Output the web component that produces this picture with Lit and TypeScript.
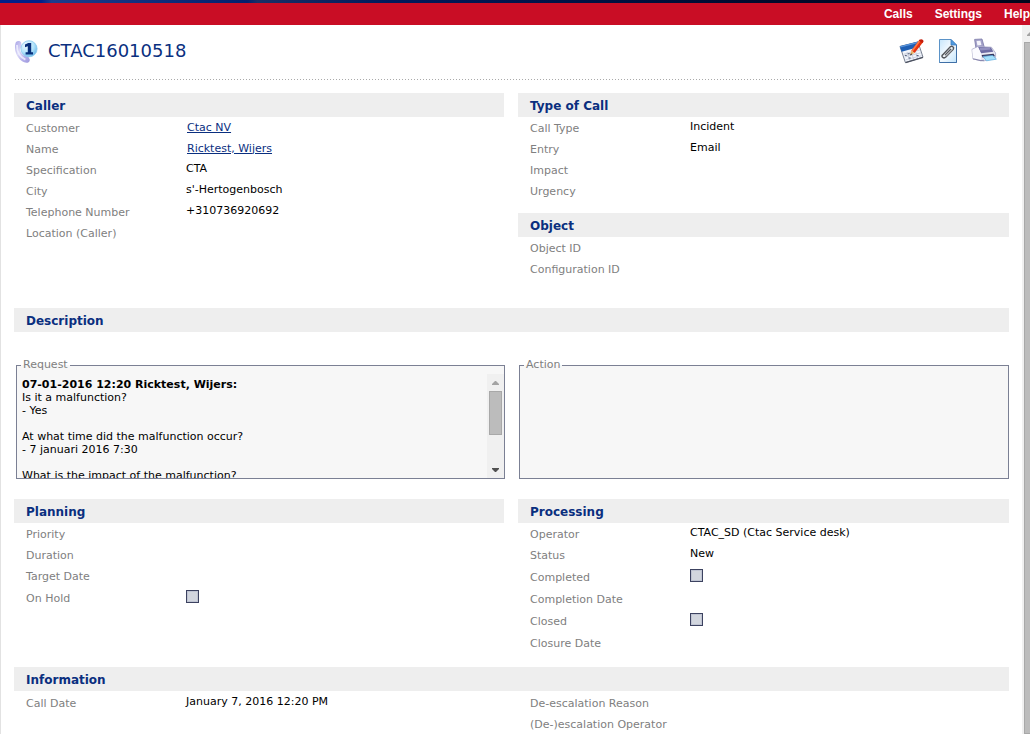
import { LitElement, html, css, svg } from "lit";
import { customElement, property } from "lit/decorators.js";

type Field = { label: string; value?: string; link?: boolean; check?: string };

const callerFields: Field[] = [
  { label: "Customer", value: "Ctac NV", link: true },
  { label: "Name", value: "Ricktest, Wijers", link: true },
  { label: "Specification", value: "CTA" },
  { label: "City", value: "s'-Hertogenbosch" },
  { label: "Telephone Number", value: "+310736920692" },
  { label: "Location (Caller)" },
];
const typeFields: Field[] = [
  { label: "Call Type", value: "Incident" },
  { label: "Entry", value: "Email" },
  { label: "Impact" },
  { label: "Urgency" },
];
const objectFields: Field[] = [{ label: "Object ID" }, { label: "Configuration ID" }];
const planningFields: Field[] = [
  { label: "Priority" },
  { label: "Duration" },
  { label: "Target Date" },
  { label: "On Hold", check: "on-hold" },
];
const processingFields: Field[] = [
  { label: "Operator", value: "CTAC_SD (Ctac Service desk)" },
  { label: "Status", value: "New" },
  { label: "Completed", check: "completed" },
  { label: "Completion Date" },
  { label: "Closed", check: "closed" },
  { label: "Closure Date" },
];
const infoFields: Field[] = [{ label: "Call Date", value: "January 7, 2016 12:20 PM" }];
const escalationFields: Field[] = [
  { label: "De-escalation Reason" },
  { label: "(De-)escalation Operator" },
];

const phoneIcon = svg`<svg width="24" height="24" viewBox="0 0 24 24" aria-hidden="true">
  <defs>
    <radialGradient id="ball" cx=".35" cy=".3" r=".8"><stop offset="0" stop-color="#eefaff"/><stop offset=".55" stop-color="#b4e4fb"/><stop offset="1" stop-color="#5fb0e6"/></radialGradient>
    <linearGradient id="horn" x1="0" y1="0" x2="1" y2="1"><stop offset="0" stop-color="#a9a4e6"/><stop offset=".4" stop-color="#dcdaf8"/><stop offset=".7" stop-color="#b3aeea"/><stop offset="1" stop-color="#9f99dc"/></linearGradient>
  </defs>
  <path d="M2 3C3.5 1.4 6 1.6 7 3.2L8 7.6C7.6 9 6.4 9.4 5.8 10C6.2 12.6 7.8 15 10 16.4C11.2 15.8 12.6 15.6 13.8 16.8L15.8 20.4C16 22.6 14.4 23.8 12.4 23.8C6.4 23 1.2 16.4 1 9C.9 7 1.2 4.6 2 3Z" fill="url(#horn)"/>
  <path d="M3 6C2.8 12 5.6 17.8 11.4 20.6" fill="none" stroke="#f3f2ff" stroke-width="1.8" opacity=".8"/>
  <circle cx="15" cy="9.8" r="8.1" fill="url(#ball)" stroke="#8ecbee" stroke-width=".8"/>
  <path d="M11 5.6L14.2 4H17.2V13.2H19V15.4H11.6V13.2H13.8V7.2L11 8.2Z" fill="#07307c"/>
</svg>`;

const editIcon = svg`<svg width="26" height="26" viewBox="0 0 26 26" aria-hidden="true">
  <path d="M1 8.4L19 4L24 19.2L6.4 24.6Z" fill="#f2f5fb" stroke="#6a7386" stroke-width=".9"/>
  <path d="M.8 8.2L19 3.6L20.8 8.8L2.6 13.8Z" fill="#1f5fb4"/>
  <path d="M1 8.2L19 3.8L19.4 5L1.4 9.6Z" fill="#5d97dc"/>
  <path d="M4.8 16.2L20.8 12M5.6 19L21.8 14.8M6.6 21.8L22.8 17.6M8 14L10.6 22.4M12 13L14.6 21.4M16 11.8L18.6 20.2" stroke="#bcc3d4" stroke-width=".7" fill="none"/>
  <path d="M5.8 17.4h2M9.6 20h2M17.6 17.6h2M8.8 15.8h2" stroke="#4a5674" stroke-width="1"/>
  <path d="M6.6 24.6L24 19.4" stroke="#4d5260" stroke-width="1.2"/>
  <path d="M20.6 1.8L24.2 4L15.6 15L12.4 12.6Z" fill="#e8320f"/>
  <path d="M20.6 1.8L22 2.6L13.8 13.6L12.4 12.6Z" fill="#ff7a45"/>
  <path d="M20.6 1.8C22 .2 25.2 1.8 24.4 3.8L23.4 5L19.8 2.8Z" fill="#c41d0c"/>
  <path d="M12.4 12.6L15.6 15L11.2 17.2Z" fill="#e9b56b"/><path d="M11.9 15.3L11 17.4L13.2 16.2Z" fill="#222"/>
</svg>`;

const attachIcon = svg`<svg width="26" height="26" viewBox="0 0 26 26" aria-hidden="true">
  <defs><linearGradient id="sheet" x1="0" y1="0" x2="1" y2="1"><stop offset="0" stop-color="#c7e6fb"/><stop offset=".5" stop-color="#f6fbff"/><stop offset="1" stop-color="#c2e4fb"/></linearGradient></defs>
  <path d="M4.5 1.5H16L21.5 7V24.5H4.5Z" fill="url(#sheet)" stroke="#5b93c8"/>
  <path d="M4.5 24.5H21.5V7" fill="none" stroke="#3f6fa6"/>
  <path d="M16 1.5V7H21.5Z" fill="#4e9be0" stroke="#3d7cc0" stroke-width=".8"/>
  <g fill="none" stroke-linecap="round"><path d="M7.6 17L15.4 8.8C16.8 7.4 19.6 9.2 18.2 11.2L10.8 19C8.8 21 5.6 18.8 7.6 16.8M10.4 16.6L15.6 11.2" stroke="#55585d" stroke-width="1.5"/><path d="M8.6 17.6L15.8 9.8M11.4 18L17.6 11.4" stroke="#d6d9dc" stroke-width=".6"/></g>
</svg>`;

const printIcon = svg`<svg width="26" height="26" viewBox="0 0 26 26" aria-hidden="true">
  <path d="M3.6 1.4L11 1L13.4 9.6L5 10.6Z" fill="#a3a1c8" stroke="#7a78a8" stroke-width=".8"/>
  <path d="M5.6 3L9.4 2.8L10.4 7L6.4 7.4Z" fill="#f4f4fb"/>
  <path d="M1 11.4L7 8.6L20.4 9.2L24.6 15V19.4L12.6 23L2 21Z" fill="#e9e9f3" stroke="#a6a6c6" stroke-width=".8"/>
  <path d="M7 9L20 9.4L22.4 13.8L10 15.2Z" fill="#6e6ca4"/>
  <path d="M8.4 9.8L18.8 10L19.8 11.6L9.4 12.4Z" fill="#9391c0"/>
  <path d="M1.2 11.8L7 9L10 15.4L9.8 22.4L2 21Z" fill="#fbfbff"/>
  <path d="M2 20.8L9.8 22.6L13 22.2" fill="none" stroke="#8a88ae" stroke-width="1.1"/>
  <path d="M10.6 17L22.6 15.8L24 18.2L11.6 19.6Z" fill="#35345c"/>
  <path d="M12 18.4L21.8 17.4L25.4 21.2L15.4 22.8Z" fill="#a4e0fb" stroke="#5ca9dc" stroke-width=".7"/>
</svg>`;

const fontBase = css`
  :host {
    display: block;
    font: 11px/13px "DejaVu Sans", Verdana, sans-serif;
  }
  * {
    box-sizing: border-box;
  }
`;

@customElement("field-section")
export class FieldSection extends LitElement {
  @property() heading = "";
  @property({ attribute: false }) fields: Field[] = [];

  static styles = [
    fontBase,
    css`
      .heading {
        margin: 0;
        padding: 2px 12px 0;
        background: #eee;
        color: #0a2f7f;
        font: bold 12px/22px "DejaVu Sans", Verdana, sans-serif;
      }
      .row {
        display: grid;
        grid-template-columns: 160px 1fr;
        align-items: center;
        min-height: 21px;
        padding: 1px 12px 0;
      }
      .row.roomy {
        min-height: 22px;
        padding-top: 2px;
      }
      .label {
        color: #808080;
      }
      .value {
        padding-bottom: 3px;
        color: #000;
      }
      .value.linked {
        padding: 0 0 2px 1px;
      }
      .link {
        color: #0a2f7f;
      }
      .check {
        display: block;
        appearance: none;
        width: 13px;
        height: 13px;
        margin: 0 0 3px;
        border: 1px solid #3c4260;
        background: #d2d6de;
        box-shadow: inset 0 0 0 1px #bfc4d2;
      }
    `,
  ];

  private row(f: Field, roomy: boolean) {
    if (f.check) {
      return html`<div class="row roomy">
        <label class="label" for=${f.check}>${f.label}</label>
        <input class="check" type="checkbox" id=${f.check} />
      </div>`;
    }
    return html`<div class="row ${roomy ? "roomy" : ""}">
      <span class="label">${f.label}</span>
      ${f.value
        ? html`<span class="value ${f.link ? "linked" : ""}"
            >${f.link ? html`<a class="link" href="#">${f.value}</a>` : f.value}</span
          >`
        : ""}
    </div>`;
  }

  render() {
    const firstCheck = this.fields.findIndex((f) => f.check);
    return html`
      ${this.heading ? html`<h2 class="heading">${this.heading}</h2>` : ""}
      ${this.fields.map((f, i) => this.row(f, firstCheck >= 0 && i > firstCheck))}
    `;
  }
}

@customElement("app-root")
export class AppRoot extends LitElement {
  static styles = [
    fontBase,
    css`
      :host {
        height: 100vh;
        overflow: hidden;
        background: #fff;
      }
      .shell {
        display: flex;
        flex-direction: column;
        height: 100%;
      }
      .strip {
        flex: none;
        height: 3px;
        background: linear-gradient(90deg, #001f8a 0 4%, #1d3c8c 5%, #03206e 24%, #1a2f66 25%, #001a5c 38%, #020a2c 75%, #02061c);
      }
      .nav {
        flex: none;
        display: flex;
        justify-content: flex-end;
        gap: 22px;
        height: 22px;
        overflow: hidden;
        background: #c90d25;
      }
      .navlink {
        color: #fff;
        font: bold 12px/22px "Liberation Sans", Arial, sans-serif;
        text-decoration: none;
      }
      .main {
        flex: 1;
        display: flex;
        min-height: 0;
      }
      .content {
        flex: 1;
        min-width: 0;
        overflow: hidden;
        padding: 0 13px;
        border-left: 1px solid #e2e2e2;
      }
      .top {
        display: flex;
        align-items: center;
        gap: 10px;
        height: 55px;
        padding: 0 12px 4px 0;
        margin-bottom: 13px;
        background: repeating-linear-gradient(90deg, transparent 0 1px, #aaa 1px 2px, transparent 2px 3px) bottom / 100% 1px
          no-repeat;
      }
      .title {
        flex: 1;
        margin: 0;
        color: #0a2f7f;
        font: 18px/24px "DejaVu Sans", Verdana, sans-serif;
      }
      .tool {
        display: flex;
        padding: 0;
        border: 0;
        background: none;
      }
      .columns {
        display: grid;
        grid-template-columns: 490fr 491fr;
        gap: 14px;
      }
      .stack {
        display: grid;
        gap: 12px;
      }
      .upper {
        padding-bottom: 29px;
      }
      .notes {
        padding: 26px 0 20px 2px;
      }
      .note {
        min-width: 0;
        height: 121px;
        margin: 0;
        padding: 1px 0 0;
        border: 1px solid #7b8094;
        background: #f7f7f7;
      }
      .legend {
        margin-left: 4px;
        padding: 0 2px 2px;
        color: #808080;
      }
      .scroller {
        display: flex;
        height: 104px;
      }
      .text {
        flex: 1;
        overflow: hidden;
        padding: 4px 5px 0;
      }
      .line {
        margin: 0;
      }
      .bar {
        flex: none;
        display: flex;
        flex-direction: column;
        width: 17px;
        padding: 0 2px;
        background: #f0f0f0;
      }
      .arrow {
        flex: none;
        display: flex;
        align-items: center;
        justify-content: center;
        width: 100%;
        height: 17px;
        padding: 0;
        border: 0;
        background: none;
      }
      .thumb {
        height: 44px;
        margin-bottom: auto;
        border: 1px solid #a8a8a8;
        background: #bcbcbc;
      }
      .lower {
        padding-bottom: 14px;
      }
      .info {
        padding-top: 1px;
      }
      .pagebar {
        flex: none;
        width: 8px;
        overflow: hidden;
      }
      .pagebar .bar {
        height: 100%;
      }
      .pagebar .thumb {
        flex: 1;
      }
    `,
  ];

  private arrow(label: string, d: string, fill: string) {
    return html`<button class="arrow" aria-label=${label}>
      <svg width="7" height="4" viewBox="0 0 7 4"><path d=${d} fill=${fill} /></svg>
    </button>`;
  }

  render() {
    const up = "M3 0H4L7 3V4H0V3Z";
    const down = "M0 0H7V1L4 4H3L0 1Z";
    return html`
      <div class="shell">
        <div class="strip"></div>
        <nav class="nav">
          <a class="navlink" href="#">Calls</a>
          <a class="navlink" href="#">Settings</a>
          <a class="navlink" href="#">Help</a>
        </nav>
        <div class="main">
          <main class="content">
            <header class="top">
              ${phoneIcon}
              <h1 class="title">CTAC16010518</h1>
              <button class="tool" aria-label="Edit">${editIcon}</button>
              <button class="tool" aria-label="Attachments">${attachIcon}</button>
              <button class="tool" aria-label="Print">${printIcon}</button>
            </header>
            <div class="columns upper">
              <field-section heading="Caller" .fields=${callerFields}></field-section>
              <div class="stack">
                <field-section heading="Type of Call" .fields=${typeFields}></field-section>
                <field-section heading="Object" .fields=${objectFields}></field-section>
              </div>
            </div>
            <field-section heading="Description"></field-section>
            <div class="columns notes">
              <fieldset class="note">
                <legend class="legend">Request</legend>
                <div class="scroller">
                  <div class="text">
                    <p class="line"><b>07-01-2016 12:20 Ricktest, Wijers:</b></p>
                    <p class="line">Is it a malfunction?<br />- Yes<br /><br />At what time did the malfunction occur?<br />- 7 januari 2016 7:30<br /><br />What is the impact of the malfunction?</p>
                  </div>
                  <div class="bar">
                    ${this.arrow("Scroll up", up, "#a3a3a3")}
                    <div class="thumb"></div>
                    ${this.arrow("Scroll down", down, "#505050")}
                  </div>
                </div>
              </fieldset>
              <fieldset class="note">
                <legend class="legend">Action</legend>
              </fieldset>
            </div>
            <div class="columns lower">
              <field-section heading="Planning" .fields=${planningFields}></field-section>
              <field-section heading="Processing" .fields=${processingFields}></field-section>
            </div>
            <field-section heading="Information"></field-section>
            <div class="columns info">
              <field-section .fields=${infoFields}></field-section>
              <field-section .fields=${escalationFields}></field-section>
            </div>
          </main>
          <div class="pagebar">
            <div class="bar">
              ${this.arrow("Scroll page up", up, "#a3a3a3")}
              <div class="thumb"></div>
            </div>
          </div>
        </div>
      </div>
    `;
  }
}
